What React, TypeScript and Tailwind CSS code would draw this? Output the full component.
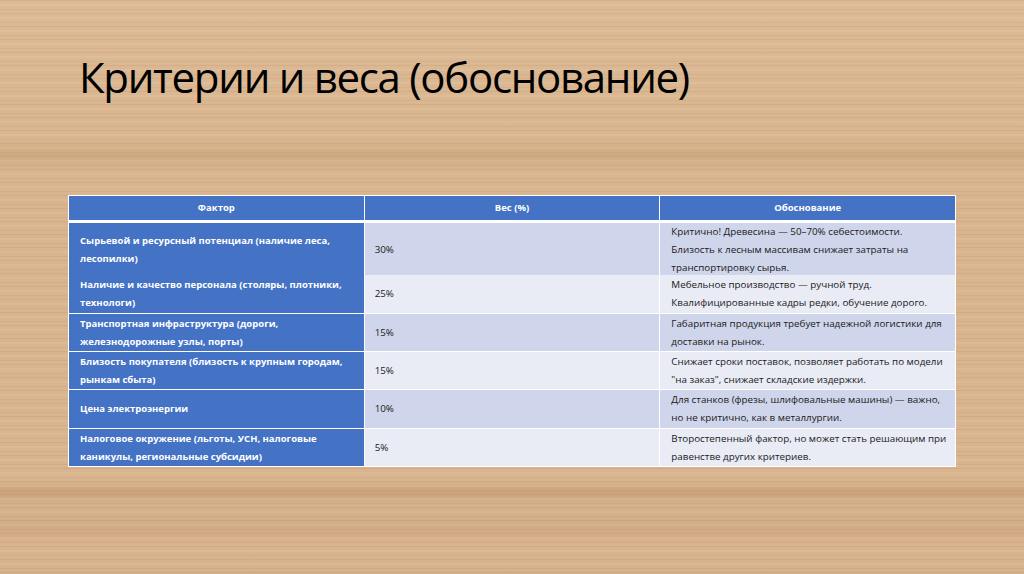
const rows = [
  {
    factor: 'Сырьевой и ресурсный потенциал (наличие леса, лесопилки)',
    weight: '30%',
    reason: ['Критично! Древесина — 50–70% себестоимости.', 'Близость к лесным массивам снижает затраты на', 'транспортировку сырья.'],
    h: 'h-[51px]',
  },
  {
    factor: 'Наличие и качество персонала (столяры, плотники, технологи)',
    weight: '25%',
    reason: ['Мебельное производство — ручной труд.', 'Квалифицированные кадры редки, обучение дорого.'],
    h: 'h-[38px]',
  },
  {
    factor: 'Транспортная инфраструктура (дороги, железнодорожные узлы, порты)',
    weight: '15%',
    reason: ['Габаритная продукция требует надежной логистики для', 'доставки на рынок.'],
    h: 'h-[37px]',
  },
  {
    factor: 'Близость покупателя (близость к крупным городам, рынкам сбыта)',
    weight: '15%',
    reason: ['Снижает сроки поставок, позволяет работать по модели', '"на заказ", снижает складские издержки.'],
    h: 'h-[37px]',
  },
  {
    factor: 'Цена электроэнергии',
    weight: '10%',
    reason: ['Для станков (фрезы, шлифовальные машины) — важно,', 'но не критично, как в металлургии.'],
    h: 'h-[38px]',
  },
  {
    factor: 'Налоговое окружение (льготы, УСН, налоговые каникулы, региональные субсидии)',
    weight: '5%',
    reason: ['Второстепенный фактор, но может стать решающим при', 'равенстве других критериев.'],
    h: 'h-[37px]',
  },
];

export default function App() {
  return (
    <div className="w-[1024px] h-[574px] overflow-hidden bg-[#d8b48f] bg-[repeating-linear-gradient(180deg,rgba(140,90,50,0.10)_0px,rgba(140,90,50,0.10)_1px,transparent_1px,transparent_4px,rgba(255,235,210,0.10)_4px,rgba(255,235,210,0.10)_6px,transparent_6px,transparent_9px,rgba(140,90,50,0.07)_9px,rgba(140,90,50,0.07)_10px,transparent_10px,transparent_13px),linear-gradient(180deg,#dcba95_0px,#d9b690_140px,#cfa982_155px,#d8b48f_170px,#d8b48f_480px,#cba27b_492px,#d6b28d_505px,#d2ab85_530px,#d8b48f_545px,#d6b18c_574px)] font-['Open_Sans',sans-serif]">
      <div className="pt-[49px] pl-[79px] h-[195px]">
        <h1 className="text-[42px] leading-[56px] tracking-[-1.3px] text-black">
          Критерии и веса (обоснование)
        </h1>
      </div>

      <div className="ml-[68px] w-[888px] bg-white p-px flex flex-col gap-px text-[9.8px] leading-[18px]">
        <div className="grid grid-cols-3 gap-px h-[24px] bg-white mb-[2px]">
          <div className="bg-[#4472c4] text-white font-bold text-[9.5px] flex items-center justify-center">Фактор</div>
          <div className="bg-[#4472c4] text-white font-bold text-[9.5px] flex items-center justify-center">Вес (%)</div>
          <div className="bg-[#4472c4] text-white font-bold text-[9.5px] flex items-center justify-center">Обоснование</div>
        </div>
        {rows.map((r, i) => (
          <div key={i} className={`grid grid-cols-3 gap-px ${r.h}`}>
            <div className="bg-[#4472c4] text-white font-bold text-[9.5px] flex items-center px-[11px]">
              <span>{r.factor}</span>
            </div>
            <div className={`${i % 2 === 0 ? 'bg-[#cfd5ea]' : 'bg-[#e9ebf5]'} text-[#1a1a1a] flex items-center px-[10px]`}>
              {r.weight}
            </div>
            <div className={`${i % 2 === 0 ? 'bg-[#cfd5ea]' : 'bg-[#e9ebf5]'} text-[#1a1a1a] flex flex-col justify-center px-[11px] whitespace-nowrap`}>
              {r.reason.map((line, j) => (
                <span key={j}>{line}</span>
              ))}
            </div>
          </div>
        ))}
      </div>
    </div>
  );
}
